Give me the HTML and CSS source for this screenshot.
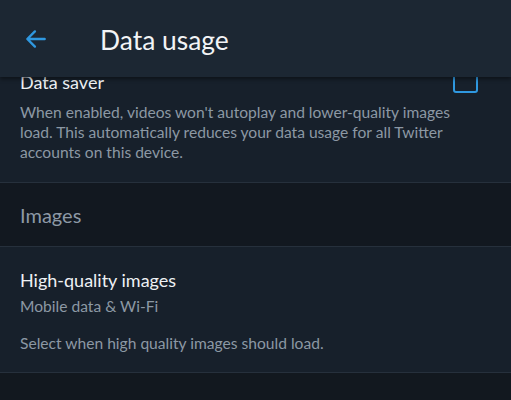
FILE: index.html
```html
<!DOCTYPE html>
<html lang="en">
<head>
 <meta charset="UTF-8">
 <meta name="viewport" content="width=device-width, initial-scale=1.0">
 <title>Data usage</title>
 <link rel="stylesheet" href="styles.css">
</head>
<body>
 <header class="topbar">
 <button class="back-btn" aria-label="Back">
 <svg viewBox="0 0 24 24" width="26" height="26">
 <path d="M20 12H4.5M11 5l-7 7 7 7" fill="none" stroke="currentColor" stroke-width="2.2" stroke-linecap="round" stroke-linejoin="round"/>
 </svg>
 </button>
 <h1>Data usage</h1>
 </header>

 <section class="group">
 <div class="row">
 <div class="row-head">
 <div class="row-title">Data saver</div>
 <span class="checkbox"></span>
 </div>
 <p class="row-desc">When enabled, videos won't autoplay and lower-quality images load. This automatically reduces your data usage for all Twitter accounts on this device.</p>
 </div>
 </section>

 <div class="group-label">Images</div>

 <section class="group">
 <div class="row stacked">
 <div class="row-title">High-quality images</div>
 <div class="row-sub">Mobile data &amp; Wi-Fi</div>
 <p class="row-desc">Select when high quality images should load.</p>
 </div>
 </section>
</body>
</html>
```

FILE: styles.css
```css
* {
margin: 0;
padding: 0;
box-sizing: border-box;
font-family: 'Lato', 'Noto Sans', sans-serif;
}

body {
background: #12181f;
min-height: 100vh;
overflow: hidden;
}

.topbar {
position: relative;
z-index: 2;
height: 77px;
display: flex;
align-items: center;
background: #1c2733;
box-shadow: 0 2px 4px rgba(0, 0, 0, 0.45);
}

.back-btn {
width: 74px;
height: 77px;
display: flex;
align-items: center;
justify-content: center;
background: none;
border: none;
color: #2f98e0;
padding-right: 2px;
}

.topbar h1 {
margin-left: 26px;
margin-top: 2px;
color: #f2f4f6;
font-size: 26.4px;
font-weight: 400;
}

.group {
background: #17202b;
border-bottom: 1px solid #26303c;
}

.group:first-of-type {
margin-top: -7px;
}

.row {
padding: 0 40px 20px 20px;
}

.row-head {
display: flex;
align-items: flex-start;
justify-content: space-between;
margin-right: -7px;
}

.row-title {
color: #eef1f4;
font-size: 18px;
line-height: 24px;
}

.row-desc {
color: #8c98a4;
font-size: 15.6px;
line-height: 20px;
margin-top: 8px;
}

.checkbox {
width: 25px;
height: 24px;
margin-top: -1px;
border: 2px solid #2f98e0;
border-radius: 3px;
flex-shrink: 0;
}

.group-label {
height: 64px;
display: flex;
align-items: center;
padding: 0 20px;
color: #8d99a6;
font-size: 20px;
background: #121820;
border-bottom: 1px solid #26303c;
}

.row.stacked {
display: flex;
flex-direction: column;
padding: 21px 20px 19px 20px;
}

.row-sub {
color: #8c98a4;
font-size: 15.6px;
line-height: 20px;
margin-top: 4px;
}

.row.stacked .row-desc {
margin-top: 17px;
}
```
